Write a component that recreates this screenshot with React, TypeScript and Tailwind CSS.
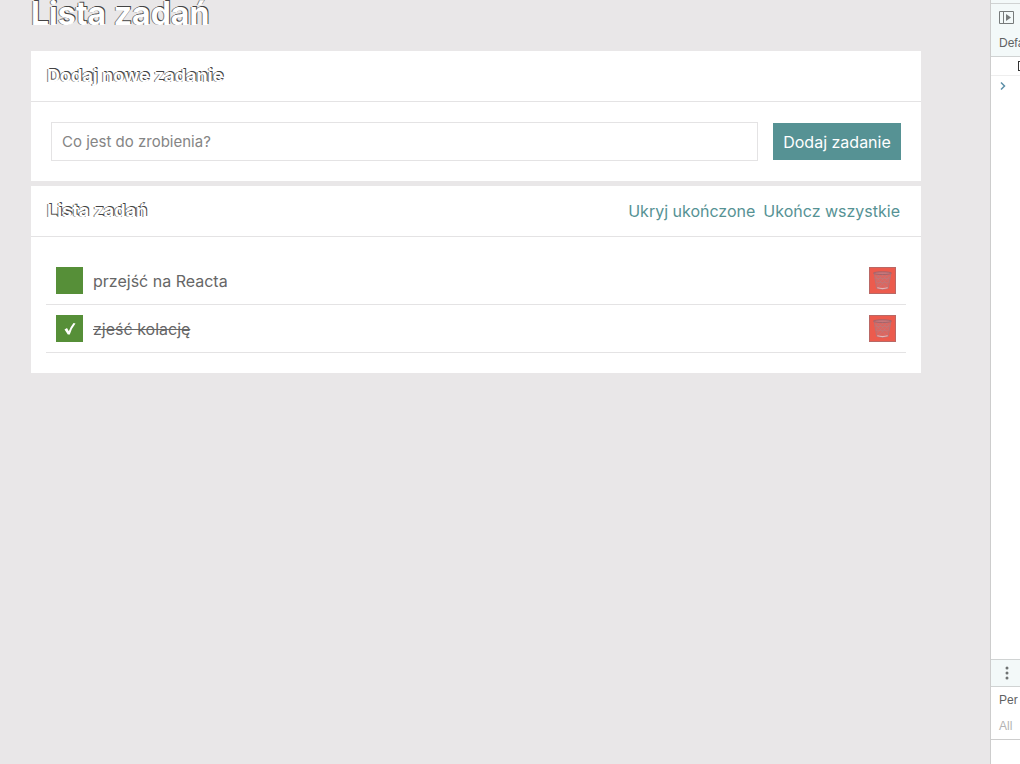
import { useState } from "react";
import type { FormEvent, ReactNode } from "react";

type Task = { id: number; content: string; done: boolean };

const initialTasks: Task[] = [
  { id: 1, content: "przejść na Reacta", done: false },
  { id: 2, content: "zjeść kolację", done: true },
];

const outlined =
  "font-bold text-white [text-shadow:1px_-1px_0_#444444,-1px_0_0_#777777]";

function Section({ title, actions, children }: { title: string; actions?: ReactNode; children: ReactNode }) {
  return (
    <section className="bg-white">
      <header className="flex h-[51px] items-center justify-between border-b border-[#e4e3e4] pr-[21px] pl-4">
        <h2 className={`text-[18px] leading-6 ${outlined}`}>{title}</h2>
        {actions}
      </header>
      {children}
    </section>
  );
}

function BasketIcon() {
  return (
    <svg viewBox="0 0 18 20" className="h-[21px] w-[19px] shrink-0" fill="none" aria-hidden="true">
      <path d="M1 3 3.500 17.500Q9 19.500 14.500 17.500L17 3Z" fill="#dc6660" stroke="#a9787e" strokeWidth=".7" />
      <path
        d="m2 6 11 11M4 4l10 10M8 4l7 7M12 4l4 4M16 6 5 17M14 4 4 14M10 4 3 11M6 4 2 8M2.500 8h13M3 12h12"
        stroke="#b87c80"
        strokeWidth=".5"
      />
      <ellipse cx="9" cy="3" rx="8.500" ry="1.300" fill="#c8777a" stroke="#98636b" strokeWidth=".8" />
      <path d="M4 17Q9 18.500 14 17" stroke="#e5b5b6" strokeWidth="1" />
    </svg>
  );
}

function DevTools() {
  return (
    <aside className="flex w-[30px] shrink-0 flex-col overflow-hidden border-l border-[#cdcdcd] bg-white text-xs whitespace-nowrap text-[#5f6262]">
      <div className="h-[57px] border-b border-[#d0d3d3] bg-[#f3f9f9]">
        <div className="h-1 border-b border-[#d0d3d3]" />
        <button type="button" aria-label="Pokaż panel boczny" className="flex h-[26px] items-center pl-2">
          <svg viewBox="0 0 15 13" className="h-[13px] w-[15px]" fill="none" aria-hidden="true">
            <path d="M.5.500h14v12H.5zM4.500.500v12" stroke="#777b7b" />
            <path d="m7 3 5 3.500L7 10z" fill="#777b7b" />
          </svg>
        </button>
        <p className="pl-2 leading-[26px]">Defa</p>
      </div>
      <div className="flex h-[19px] items-center border-b border-[#eeeeee] pl-[27px]">
        <span className="h-[10px] w-[10px] shrink-0 border border-[#333333]" />
      </div>
      <div className="flex-1 pt-[6px] pl-[9px]">
        <svg viewBox="0 0 6 8" className="h-2 w-[6px]" fill="none" aria-hidden="true">
          <path d="m1 .5 3.500 3.500L1 7.500" stroke="#5c8fa8" strokeWidth="1.500" />
        </svg>
      </div>
      <div className="flex h-7 items-center border-y border-[#d0d3d3] bg-[#f3f9f9] pl-[14px]">
        <button type="button" aria-label="Więcej opcji">
          <svg viewBox="0 0 4 14" className="h-[14px] w-1" fill="#6f7373" aria-hidden="true">
            <circle cx="2" cy="2" r="1.500" />
            <circle cx="2" cy="7" r="1.500" />
            <circle cx="2" cy="12" r="1.500" />
          </svg>
        </button>
      </div>
      <div className="h-[53px] border-b border-[#cdcdcd] pl-2 leading-[26px]">
        <p>Per</p>
        <p className="text-[#b3b3b3]">All</p>
      </div>
      <div className="h-6" />
    </aside>
  );
}

export default function App() {
  const [tasks, setTasks] = useState(initialTasks);
  const [hideDone, setHideDone] = useState(false);
  const [content, setContent] = useState("");

  const addTask = (event: FormEvent) => {
    event.preventDefault();
    if (!content.trim()) return;
    setTasks([...tasks, { id: Date.now(), content: content.trim(), done: false }]);
    setContent("");
  };
  const toggle = (id: number) =>
    setTasks(tasks.map((task) => (task.id === id ? { ...task, done: !task.done } : task)));

  return (
    <div className="flex min-h-screen bg-[#e9e7e8] font-['Liberation_Sans',sans-serif]">
      <main className="min-w-0 flex-1 pr-[69px] pl-[31px] font-[Inter,sans-serif] text-base text-[#666666]">
        <h1 className={`h-[51px] text-[32px] leading-7 ${outlined}`}>Lista zadań</h1>
        <div className="flex flex-col gap-[5px]">
          <Section title="Dodaj nowe zadanie">
            <form onSubmit={addTask} className="flex items-center gap-[15px] p-5">
              <input
                aria-label="Nowe zadanie"
                value={content}
                onChange={(event) => setContent(event.target.value)}
                placeholder="Co jest do zrobienia?"
                className="h-[39px] min-w-0 flex-1 border border-[#e4e3e4] px-[10px] text-[15px] outline-none placeholder:text-[#858585]"
              />
              <button type="submit" className="h-[37px] w-32 bg-[#569294] text-white">
                Dodaj zadanie
              </button>
            </form>
          </Section>
          <Section
            title="Lista zadań"
            actions={
              <div className="flex gap-2 text-[#569294]">
                <button type="button" onClick={() => setHideDone(!hideDone)}>
                  {hideDone ? "Pokaż ukończone" : "Ukryj ukończone"}
                </button>
                <button type="button" onClick={() => setTasks(tasks.map((task) => ({ ...task, done: true })))}>
                  Ukończ wszystkie
                </button>
              </div>
            }
          >
            <ul className="px-[15px] py-5">
              {tasks
                .filter((task) => !hideDone || !task.done)
                .map((task) => (
                  <li key={task.id} className="flex items-center gap-[10px] border-b border-[#e4e3e4] p-[10px]">
                    <button
                      type="button"
                      aria-label={`Ukończ: ${task.content}`}
                      onClick={() => toggle(task.id)}
                      className="flex size-[27px] shrink-0 items-center justify-center bg-[#568f38]"
                    >
                      {task.done && (
                        <svg viewBox="0 0 12 14" className="h-[14px] w-3" aria-hidden="true">
                          <path d="M.5 7.500 3 6 4.800 9.200Q7 4 9.500 1L11.500 1.500Q7.800 6 5.800 12.500H3.800Z" fill="white" />
                        </svg>
                      )}
                    </button>
                    <span className={task.done ? "flex-1 line-through" : "flex-1"}>{task.content}</span>
                    <button
                      type="button"
                      aria-label={`Usuń: ${task.content}`}
                      onClick={() => setTasks(tasks.filter(({ id }) => id !== task.id))}
                      className="flex size-[27px] shrink-0 items-center justify-center border border-[#b96865] bg-[#ec5b4d]"
                    >
                      <BasketIcon />
                    </button>
                  </li>
                ))}
            </ul>
          </Section>
        </div>
      </main>
      <DevTools />
    </div>
  );
}
